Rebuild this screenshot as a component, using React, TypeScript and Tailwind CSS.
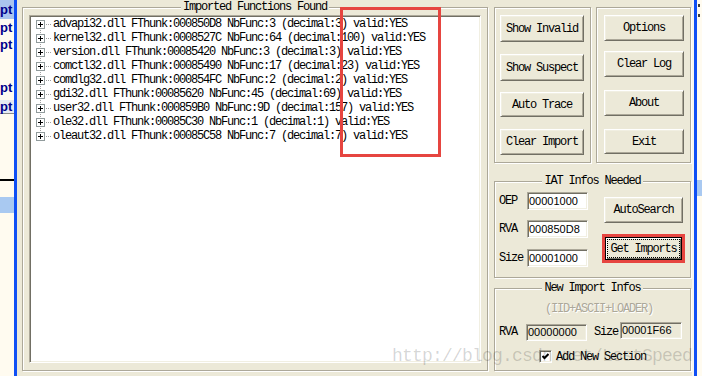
import React from "react";

const sim = "font-['Liberation_Mono',monospace] text-[12px] tracking-[-1.2px]";
const sans = "font-['Liberation_Sans',sans-serif] text-[11px] text-black";

// classic 3d edges
const raised =
  "border border-t-white border-l-white border-r-[#716f64] border-b-[#716f64] shadow-[inset_1px_1px_0_#f1efe2,inset_-1px_-1px_0_#aca899]";
const sunken =
  "border border-t-[#aca899] border-l-[#aca899] border-r-white border-b-white shadow-[inset_1px_1px_0_#716f64,inset_-1px_-1px_0_#f1efe2]";

const imports = [
  "advapi32.dll FThunk:000850D8 NbFunc:3 (decimal:3) valid:YES",
  "kernel32.dll FThunk:0008527C NbFunc:64 (decimal:100) valid:YES",
  "version.dll FThunk:00085420 NbFunc:3 (decimal:3) valid:YES",
  "comctl32.dll FThunk:00085490 NbFunc:17 (decimal:23) valid:YES",
  "comdlg32.dll FThunk:000854FC NbFunc:2 (decimal:2) valid:YES",
  "gdi32.dll FThunk:00085620 NbFunc:45 (decimal:69) valid:YES",
  "user32.dll FThunk:000859B0 NbFunc:9D (decimal:157) valid:YES",
  "ole32.dll FThunk:00085C30 NbFunc:1 (decimal:1) valid:YES",
  "oleaut32.dll FThunk:00085C58 NbFunc:7 (decimal:7) valid:YES",
];

type GroupProps = { title?: string; className?: string; children?: React.ReactNode };

const Group = ({ title, className = "", children }: GroupProps) => (
  <div
    className={`relative shrink-0 border border-[#aca899] shadow-[inset_1px_1px_0_#fff,1px_1px_0_#fff] ${className}`}
  >
    {title && (
      <div className="absolute inset-x-0 -top-[7px] flex justify-center">
        <span className={`bg-[#ece9d8] px-[2px] leading-[12px] whitespace-nowrap ${sim}`}>{title}</span>
      </div>
    )}
    {children}
  </div>
);

const Btn = ({ className = "", children }: { className?: string; children: React.ReactNode }) => (
  <button
    type="button"
    className={`flex shrink-0 items-center justify-center bg-[#ece9d8] leading-none whitespace-nowrap ${raised} ${sim} ${className}`}
  >
    {children}
  </button>
);

const Field = ({ value, disabled, className = "" }: { value: string; disabled?: boolean; className?: string }) => (
  <div
    className={`flex shrink-0 items-center pl-[1px] leading-none ${disabled ? "bg-[#ece9d8]" : "bg-white"} ${sunken} ${sans} ${className}`}
  >
    {value}
  </div>
);

const Expander = ({ first, last }: { first: boolean; last: boolean }) => (
  <svg width="22" height="14" className="shrink-0" shapeRendering="crispEdges">
    {!first && <rect x="9" y="1" width="1" height="1" fill="#a0a0a0" />}
    {!last && <rect x="9" y="13" width="1" height="1" fill="#a0a0a0" />}
    <rect x="5.5" y="3.5" width="8" height="8" fill="#fff" stroke="#919b9c" />
    <rect x="7" y="7" width="5" height="1" fill="#000" />
    <rect x="9" y="5" width="1" height="5" fill="#000" />
    {[15, 17, 19].map((x) => (
      <rect key={x} x={x} y="7" width="1" height="1" fill="#a0a0a0" />
    ))}
  </svg>
);

export default function App() {
  return (
    <div className="relative flex h-[376px] w-[702px] overflow-hidden bg-[#ece9d8] text-black">
      {/* editor behind, left edge */}
      <div className="flex w-[14px] shrink-0 flex-col overflow-hidden bg-[#fffbf0] font-['Liberation_Sans',sans-serif] text-[13px] font-bold text-[#00008b]">
        <div className="h-[19px] bg-[#aac4ee] leading-[19px]">pt</div>
        <div className="h-[17px] leading-[17px]">pt</div>
        <div className="h-[17px] leading-[17px]">pt</div>
        <div className="h-[26px]" />
        <div className="h-[17px] leading-[17px]">pt</div>
        <div className="h-[4px]" />
        <div className="h-[14px] border-b border-[#8a8a8a] bg-[#e6eaf2] leading-[13px]">pt</div>
        <div className="h-[65px]" />
        <div className="h-[2px] bg-black" />
        <div className="h-[16px]" />
        <div className="h-[16px] bg-[#a9c9f1]" />
      </div>
      <div className="w-[3px] shrink-0 bg-[#0f4ff5]" />

      {/* dialog */}
      <div className="flex w-[675px] shrink-0 pl-[5px] pt-[7px]">
        <Group title="Imported Functions Found" className="h-[364px] w-[466px] px-[6px] pt-[7px]">
          <div className={`h-[348px] w-[452px] overflow-hidden bg-white pl-[1px] pt-[1px] ${sunken}`}>
            {imports.map((row, i) => (
              <div key={row} className="flex h-[14px] items-center">
                <Expander first={i === 0} last={i === imports.length - 1} />
                <span className={`leading-[14px] whitespace-nowrap ${sim}`}>{row}</span>
              </div>
            ))}
          </div>
        </Group>

        <div className="ml-[6px] flex w-[197px] shrink-0 flex-col">
          <div className="flex gap-[5px]">
            <Group className="flex h-[156px] w-[97px] flex-col pl-[5px] pt-[7px]">
              <Btn className="h-[27px] w-[84px]">Show Invalid</Btn>
              <Btn className="mt-[12px] h-[27px] w-[84px]">Show Suspect</Btn>
              <Btn className="mt-[11px] h-[25px] w-[84px]">Auto Trace</Btn>
              <Btn className="mt-[12px] h-[26px] w-[84px]">Clear Import</Btn>
            </Group>
            <Group className="flex h-[156px] w-[95px] flex-col pl-[7px] pt-[7px]">
              <Btn className="h-[26px] w-[80px]">Options</Btn>
              <Btn className="mt-[10px] h-[26px] w-[80px]">Clear Log</Btn>
              <Btn className="mt-[13px] h-[26px] w-[80px]">About</Btn>
              <Btn className="mt-[13px] h-[25px] w-[80px]">Exit</Btn>
            </Group>
          </div>

          <Group title="IAT Infos Needed" className="mt-[18px] flex h-[97px]">
            <div className="flex flex-col pl-[4px] pt-[10px]">
              <div className="flex items-center">
                <span className={`w-[28px] leading-[12px] ${sim}`}>OEP</span>
                <Field value="00001000" className="h-[18px] w-[61px]" />
              </div>
              <div className="mt-[10px] flex items-center">
                <span className={`w-[28px] leading-[12px] ${sim}`}>RVA</span>
                <Field value="000850D8" className="h-[18px] w-[61px]" />
              </div>
              <div className="mt-[11px] flex items-center">
                <span className={`w-[28px] leading-[12px] ${sim}`}>Size</span>
                <Field value="00001000" className="h-[18px] w-[61px]" />
              </div>
            </div>
            <div className="ml-[14px] flex flex-col pt-[15px]">
              <Btn className="ml-[2px] h-[26px] w-[79px]">AutoSearch</Btn>
              <div className="mt-[11px] h-[29px] w-[83px] border-[3px] border-[#e64540]">
                <button
                  type="button"
                  className="flex h-full w-full border border-black bg-[#ece9d8] p-[1px] shadow-[inset_1px_1px_0_#fff,inset_-1px_-1px_0_#716f64]"
                >
                  <span
                    className={`flex flex-1 items-center justify-center border border-dotted border-black leading-none whitespace-nowrap ${sim}`}
                  >
                    Get Imports
                  </span>
                </button>
              </div>
            </div>
          </Group>

          <Group title="New Import Infos" className="mt-[10px] flex h-[83px] flex-col">
            <div
              className={`mt-[14px] pl-[50px] leading-[12px] whitespace-nowrap text-[#aca899] [text-shadow:1px_1px_0_#fff] ${sim}`}
            >
              (IID+ASCII+LOADER)
            </div>
            <div className="mt-[7px] flex items-start pl-[4px]">
              <span className={`mt-[4px] w-[27px] leading-[12px] ${sim}`}>RVA</span>
              <Field value="00000000" disabled className="mt-[2px] h-[17px] w-[61px]" />
              <span className={`ml-[7px] mt-[4px] w-[26px] leading-[12px] ${sim}`}>Size</span>
              <Field value="00001F66" disabled className="h-[17px] w-[62px]" />
            </div>
            <div className="mt-[9px] flex items-center pl-[44px]">
              <div className={`flex h-[13px] w-[13px] items-center justify-center bg-white ${sunken}`}>
                <svg width="7" height="7" viewBox="0 0 7 7">
                  <polyline points="0.5,3 2.5,5 6.5,1" fill="none" stroke="#000" strokeWidth="2" />
                </svg>
              </div>
              <span className={`ml-[4px] leading-[12px] whitespace-nowrap ${sim}`}>Add New Section</span>
            </div>
          </Group>
        </div>
      </div>

      {/* window behind, right edge */}
      <div className="w-[2px] shrink-0 bg-[#f7f6ef]" />
      <div className="w-[3px] shrink-0 bg-[#0f4ff5]" />
      <div className="flex w-[5px] shrink-0 flex-col bg-[#fffbf0]">
        <div className="ml-[1px] mt-[4px] h-[3px] w-[2px] bg-[#404040]" />
        <div className="ml-[1px] mt-[7px] h-[3px] w-[2px] bg-[#404040]" />
        <div className="mt-[163px] h-[16px] bg-[#a9c9f1]" />
      </div>

      {/* annotation + watermark */}
      <div className="pointer-events-none absolute left-[340px] top-[7px] h-[150px] w-[101px] border-[3px] border-[#e64540]" />
      <div className="pointer-events-none absolute left-[392px] top-[347px] font-['Liberation_Mono',monospace] text-[18px] leading-[18px] tracking-[-0.8px] whitespace-nowrap text-black/[0.17]">
        http://blog.csdn.net/LostSpeed
      </div>
    </div>
  );
}
